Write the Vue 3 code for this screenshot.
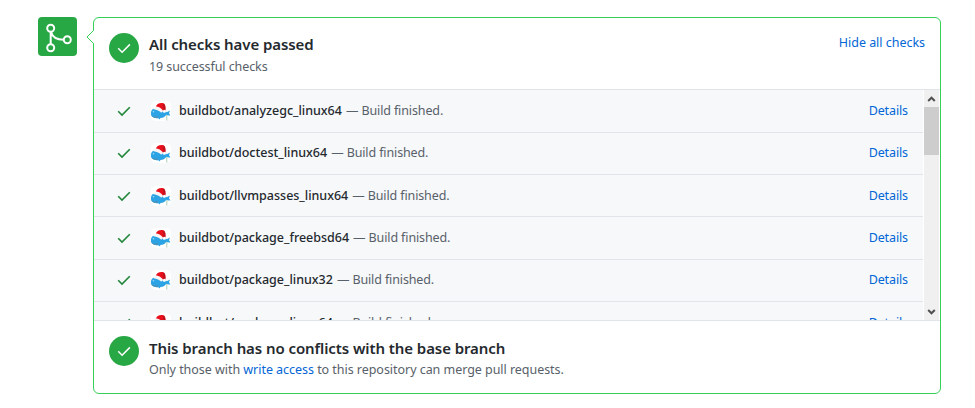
<script setup>
const checks = [
  'analyzegc_linux64',
  'doctest_linux64',
  'llvmpasses_linux64',
  'package_freebsd64',
  'package_linux32',
  'package_linux64',
]
</script>

<template>
  <main class="page">
    <div class="badge">
      <svg width="39" height="39" viewBox="0 0 39 39" fill="none" stroke="#fff" stroke-width="2">
        <circle cx="12.7" cy="11.2" r="3.5" />
        <circle cx="12.7" cy="30.7" r="3.5" />
        <circle cx="29.3" cy="22.7" r="3.5" />
        <path d="M12.7 14.7v12.5M13 15c1.5 5.5 6 7.7 12.8 7.7" />
      </svg>
    </div>
    <section class="box">
      <svg class="caret" width="8" height="16" viewBox="0 0 8 16">
        <path d="M8 1.2 1.2 8 8 14.8z" fill="#fff" />
        <path d="M7.5 1.5 1 8l6.5 6.5" fill="none" stroke="#34d058" />
      </svg>
      <header class="head">
        <span class="disc">
          <svg width="30" height="30" viewBox="0 0 30 30" fill="none" stroke="#fff" stroke-width="1.5"><path d="m9.2 15.3 3.9 3.9 7.8-7.8" /></svg>
        </span>
        <div class="copy lifted">
          <h3 class="title">All checks have passed</h3>
          <p class="sub">19 successful checks</p>
        </div>
        <a class="link hide">Hide all checks</a>
      </header>
      <div class="list">
        <div class="rows">
          <div v-for="name in checks" :key="name" class="row">
            <svg class="tick" width="14" height="12" viewBox="0 0 14 12" fill="none" stroke="#22863a" stroke-width="1.6"><path d="m1.2 6.3 3.8 3.8 7.8-7.8" /></svg>
            <svg class="avatar" width="20" height="20" viewBox="0 0 20 20">
              <rect width="20" height="20" rx="5" fill="#fff" />
              <path d="M0 11C.5 8.500 2 7.500 4.500 7.500c4 .3 6 2.500 8.500 4l1-2 1.700 1.700 3.300-1.700-1 2.800 1.500 2.200-4.500-.3c-1 1.600-3 2.600-5.500 2.800L8.500 18.500l-1-1.200C3.500 17.300.5 16 0 13.500z" fill="#2ba3e4" />
              <path d="M.3 14.300c1.800 1.300 4.500 1.500 6.700.8l-.5 2.200C3.500 17.300 1 16.200.3 14.300z" fill="#4b92bc" />
              <path d="M15 19.500v-5l.7-1 .7 1v5z" fill="#c3dcca" />
              <circle cx="2.500" cy="10.800" r=".8" fill="#a7dcf5" />
              <path d="M4.800 6C5.500 3 8.500 1.500 12.500 2.200c2 1 2.500 4.200 2 7.300l-2.500.8C10 8.500 7.500 7 4.800 6z" fill="#e9101c" />
              <path d="m12 3.500.5 6h1.500c.6-3 0-5.500-1-7z" fill="#b81520" />
              <path d="M4.300 5.300c3.200.2 6 2 7.700 4.200l-1.700 2.300C8.500 10 6 8.500 2.500 8.200z" fill="#f8f5f7" />
              <circle cx="13.400" cy="10.300" r="1.500" fill="#fff" />
            </svg>
            <span class="name">buildbot/{{ name }}</span>
            <span class="status">— Build finished.</span>
            <a class="link details">Details</a>
          </div>
        </div>
        <div class="bar">
          <svg width="15" height="17" viewBox="0 0 15 17" fill="none" stroke="#505050" stroke-width="2"><path d="m4.200 11 3.300-3.300 3.300 3.300" /></svg>
          <div class="thumb"></div>
          <svg class="down" width="15" height="17" viewBox="0 0 15 17" fill="none" stroke="#505050" stroke-width="2"><path d="m4.200 7 3.300 3.300 3.300-3.300" /></svg>
        </div>
      </div>
      <footer class="head">
        <span class="disc">
          <svg width="30" height="30" viewBox="0 0 30 30" fill="none" stroke="#fff" stroke-width="1.5"><path d="m9.200 15.300 3.900 3.900 7.800-7.800" /></svg>
        </span>
        <div class="copy">
          <h3 class="title">This branch has no conflicts with the base branch</h3>
          <p class="sub">Only those with <a class="link">write access</a> to this repository can merge pull requests.</p>
        </div>
      </footer>
    </section>
  </main>
</template>

<style>
body { background: #fff; }
</style>

<style scoped>
* { box-sizing: border-box; }
.page {
  display: flex;
  align-items: flex-start;
  height: 408px;
  padding: 17px 34px 0 38px;
  font: 12.500px/20px "Noto Sans", "Open Sans", sans-serif;
  color: #24292e;
  overflow: hidden;
}
.badge {
  width: 39px;
  height: 39px;
  margin-right: 16px;
  border-radius: 4px;
  background: #28a745;
}
svg { display: block; flex: none; }
.box {
  position: relative;
  width: 848px;
  height: 377px;
  border: 1px solid #34d058;
  border-radius: 6px;
}
.caret { position: absolute; left: -8px; top: 11px; }
.head { display: flex; height: 71px; padding: 15px 15px 0; }
.disc {
  width: 30px;
  height: 30px;
  margin-right: 10px;
  border-radius: 50%;
  background: #28a745;
}
.copy { flex: 1; white-space: nowrap; }
.title {
  margin: 0;
  font-size: 15px;
  line-height: 24px;
  font-weight: 600;
  letter-spacing: -0.080px;
}
.lifted .title { margin: -1px 0 1px; }
.sub { margin: 0; line-height: 20px; letter-spacing: -0.040px; color: #586069; }
.lifted .sub { letter-spacing: -0.080px; }
.link { color: #0366d6; }
.hide { line-height: 20px; letter-spacing: -0.030px; }
.list {
  display: flex;
  height: 232px;
  border-top: 1px solid #e1e4e8;
  border-bottom: 1px solid #e1e4e8;
  overflow: hidden;
}
.rows {
  flex: 1;
  margin-right: 1px;
  height: 230px;
  padding-top: 0.600px;
  overflow: hidden;
  background: #f6f8fa;
}
.row {
  display: flex;
  align-items: center;
  height: 42.300px;
  padding: 0 15px 0.400px 23px;
  border-bottom: 1px solid #e1e4e8;
  white-space: nowrap;
}
.tick { margin: 0 20px 0 0; }
.avatar { margin-right: 8px; }
.name { font-weight: 500; margin-right: 4px; letter-spacing: -0.010px; }
.status { letter-spacing: -0.120px; color: #586069; }
.details { margin-left: auto; letter-spacing: -0.120px; }
.bar {
  display: flex;
  flex-direction: column;
  width: 15px;
  margin-right: 1px;
  background: #f0f0f0;
}
.thumb { height: 48px; background: #cdcdcd; }
.down { margin-top: auto; }
</style>
